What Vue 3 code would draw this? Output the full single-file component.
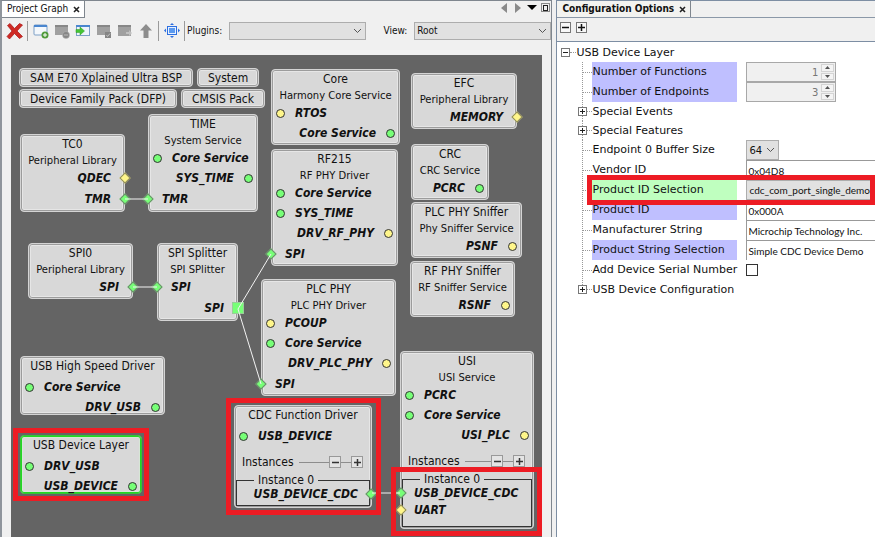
<script setup>
import { ref } from 'vue'

const packs = [
  ['SAM E70 Xplained Ultra BSP', 'System'],
  ['Device Family Pack (DFP)', 'CMSIS Pack'],
]

const i = (name, color = 'green', shape = 'circle') => ({ name, color, shape, side: 'in' })
const o = (name, color = 'green', shape = 'circle') => ({ name, color, shape, side: 'out' })

// x, y, w, h are positions on the graph canvas
const nodes = [
  { title: 'Core', sub: 'Harmony Core Service', x: 260, y: 14, w: 129, h: 76, ports: [i('RTOS', 'yellow'), o('Core Service')] },
  { title: 'EFC', sub: 'Peripheral Library', x: 400, y: 18, w: 106, h: 56, ports: [o('MEMORY', 'yellow', 'diamond')] },
  { title: 'TC0', sub: 'Peripheral Library', x: 9, y: 79, w: 105, h: 78, ports: [o('QDEC', 'yellow', 'diamond'), o('TMR', 'green', 'diamond')] },
  { title: 'TIME', sub: 'System Service', x: 137, y: 59, w: 110, h: 98, ports: [i('Core Service'), o('SYS_TIME'), i('TMR', 'green', 'diamond')] },
  { title: 'RF215', sub: 'RF PHY Driver', x: 260, y: 94, w: 127, h: 117, ports: [i('Core Service'), i('SYS_TIME'), o('DRV_RF_PHY', 'yellow'), i('SPI', 'green', 'diamond')] },
  { title: 'CRC', sub: 'CRC Service', x: 400, y: 89, w: 78, h: 56, ports: [o('PCRC')] },
  { title: 'PLC PHY Sniffer', sub: 'Phy Sniffer Service', x: 400, y: 147, w: 111, h: 56, ports: [o('PSNF', 'yellow')] },
  { title: 'RF PHY Sniffer', sub: 'RF Sniffer Service', x: 399, y: 206, w: 105, h: 56, ports: [o('RSNF', 'yellow')] },
  { title: 'SPI0', sub: 'Peripheral Library', x: 17, y: 188, w: 105, h: 56, ports: [o('SPI', 'green', 'diamond')] },
  { title: 'SPI Splitter', sub: 'SPI SPlitter', x: 146, y: 188, w: 81, h: 78, ports: [i('SPI', 'green', 'diamond'), o('SPI', 'green', 'square')] },
  { title: 'PLC PHY', sub: 'PLC PHY Driver', x: 250, y: 224, w: 135, h: 117, ports: [i('PCOUP', 'yellow'), i('Core Service'), o('DRV_PLC_PHY', 'yellow'), i('SPI', 'green', 'diamond')] },
  { title: 'USB High Speed Driver', x: 9, y: 301, w: 145, h: 59, ports: [i('Core Service'), o('DRV_USB')] },
  { title: 'USB Device Layer', x: 9, y: 380, w: 122, h: 59, selected: true, ports: [i('DRV_USB'), o('USB_DEVICE')] },
  { title: 'CDC Function Driver', x: 223, y: 350, w: 138, h: 103, ports: [i('USB_DEVICE')], instance: [o('USB_DEVICE_CDC', 'green', 'diamond')] },
  { title: 'USI', sub: 'USI Service', x: 389, y: 296, w: 134, h: 178, ports: [i('PCRC'), i('Core Service'), o('USI_PLC', 'yellow')], instance: [i('USB_DEVICE_CDC', 'green', 'diamond'), i('UART', 'yellow', 'diamond')] },
]

const edges = [
  [114, 144, 137, 144],
  [122, 232, 146, 232],
  [227, 254, 260, 199],
  [227, 254, 250, 329],
  [361, 438, 389, 438],
]

const highlights = [
  { x: 2, y: 373, w: 136, h: 73 },
  { x: 215, y: 343, w: 155, h: 117 },
  { x: 380, y: 412, w: 151, h: 69 },
]

const box = (r) => ({ left: r.x + 'px', top: r.y + 'px', width: r.w + 'px', height: r.h + 'px' })

const rows = ref([
  { id: 'functions', label: 'Number of Functions', tint: 'violet', kind: 'number', value: 1 },
  { id: 'endpoints', label: 'Number of Endpoints', tint: 'violet', kind: 'number', value: 3 },
  { id: 'events', label: 'Special Events', kind: 'group' },
  { id: 'features', label: 'Special Features', kind: 'group' },
  { id: 'buffer', label: 'Endpoint 0 Buffer Size', kind: 'size', value: '64' },
  { id: 'vendor', label: 'Vendor ID', kind: 'text', value: '0x04D8' },
  { id: 'selection', label: 'Product ID Selection', tint: 'green', kind: 'select', value: 'cdc_com_port_single_demo', marked: true },
  { id: 'product', label: 'Product ID', tint: 'violet', kind: 'text', value: '0x000A' },
  { id: 'manufacturer', label: 'Manufacturer String', kind: 'text', value: 'Microchip Technology Inc.' },
  { id: 'string', label: 'Product String Selection', tint: 'violet', kind: 'text', value: 'Simple CDC Device Demo' },
  { id: 'serial', label: 'Add Device Serial Number', kind: 'check', value: false },
  { id: 'config', label: 'USB Device Configuration', kind: 'group' },
])
</script>

<template>
  <main class="app">
    <section class="panel graph-panel">
      <header class="tabs">
        <div class="tab active">
          <span>Project Graph</span>
          <button class="close" aria-label="Close Project Graph"><svg width="7" height="7" viewBox="0 0 7 7"><path d="M1 1l5 5M6 1l-5 5" stroke="#222" stroke-width="1.6" /></svg></button>
        </div>
        <div class="tab-nav">
          <svg width="50" height="12" viewBox="0 0 50 12">
            <path d="M6 1v10L0 6z" fill="#8a8a8a" />
            <path d="M14 1v10l6-5z" fill="#8a8a8a" />
            <path d="M26 3h10l-5 5z" fill="#000" />
            <rect x="40.500" y="1.500" width="8" height="8" fill="none" stroke="#222" stroke-dasharray="1 1" />
            <rect x="42.500" y="3.500" width="4" height="5" fill="#eee" stroke="#222" />
          </svg>
        </div>
      </header>

      <div class="toolbar">
        <button class="tool" aria-label="Remove">
          <svg width="18" height="18" viewBox="0 0 18 18"><path d="M1.500 3.500L4 1.500l4.500 5 5-5 3 1.500-5.500 6 5.500 5.500-3 2-5-5-5 5.500-2.500-2.500 5-5.500z" fill="#cf2a24" stroke="#a81616" stroke-width=".7" /></svg>
        </button>
        <span class="rule"></span>
        <button class="tool" aria-label="Add group">
          <svg width="16" height="16" viewBox="0 0 16 16"><rect x="1" y="2" width="13" height="10" rx="1" fill="#f4f8fc" stroke="#7d9fc6" /><path d="M1 2h13v2H1z" fill="#4a86cf" /><circle cx="12" cy="12" r="3.500" fill="#4f9a3a" /><path d="M12 10v4M10 12h4" stroke="#fff" /></svg>
        </button>
        <button class="tool" aria-label="Remove group">
          <svg width="16" height="16" viewBox="0 0 16 16"><rect x="1" y="2" width="13" height="10" fill="#a0a0a0" /><path d="M1 2h13v2H1z" fill="#878787" /><circle cx="12" cy="12" r="3.500" fill="#858585" stroke="#bbb" stroke-width=".5" /><path d="M10 12h4" stroke="#bbb" /></svg>
        </button>
        <button class="tool" aria-label="Import">
          <svg width="16" height="16" viewBox="0 0 16 16"><rect x="1.500" y="2.500" width="13" height="10" fill="#eef4fb" stroke="#7d9fc6" /><path d="M1 2h14v2H1z" fill="#4a86cf" /><path d="M1 6.500h4V4L9.500 8 5 12V9.500H1z" fill="#46c534" stroke="#2f9a22" stroke-width=".5" /></svg>
        </button>
        <button class="tool" aria-label="Select group">
          <svg width="16" height="16" viewBox="0 0 16 16"><rect x="1" y="2" width="13" height="10" fill="#a0a0a0" /><path d="M1 2h13v2H1z" fill="#878787" /><rect x="9" y="9" width="6" height="6" fill="#858585" /><path d="M10.500 12l1 1.500 2.500-3" fill="none" stroke="#c4c4c4" /></svg>
        </button>
        <button class="tool" aria-label="Export">
          <svg width="16" height="16" viewBox="0 0 16 16"><rect x="1" y="2" width="13" height="11" fill="#a0a0a0" /><path d="M1 2h13v2H1z" fill="#878787" /><path d="M9 9h3V7l3 3-3 3v-2H9z" fill="#c0c0c0" /></svg>
        </button>
        <button class="tool" aria-label="Up">
          <svg width="16" height="16" viewBox="0 0 16 16"><path d="M8 1l6 6.500h-3.500V15h-5V7.500H2z" fill="#8d8d8d" /></svg>
        </button>
        <span class="rule"></span>
        <button class="tool" aria-label="Fit">
          <svg width="16" height="16" viewBox="0 0 16 16"><rect x="3.500" y="3.500" width="9" height="8" fill="#e8f1ff" stroke="#2d6fe0" /><rect x="5" y="5" width="6" height="5" fill="#5b9af0" /><path d="M8 0l2 2H6zM8 15l2-2H6zM0 7.500l2-2v4zM16 7.500l-2-2v4z" fill="#2d6fe0" /></svg>
        </button>
        <span class="rule"></span>
        <label for="plugins">Plugins:</label>
        <div class="combo plugins">
          <select id="plugins"><option></option></select>
          <svg width="9" height="6" viewBox="0 0 9 6"><path d="M1 1l3.500 3.500L8 1" fill="none" stroke="#555" /></svg>
        </div>
        <label class="view-label" for="view">View:</label>
        <div class="combo view">
          <select id="view"><option>Root</option></select>
          <svg width="9" height="6" viewBox="0 0 9 6"><path d="M1 1l3.500 3.500L8 1" fill="none" stroke="#555" /></svg>
        </div>
      </div>

      <div class="canvas">
        <div class="packs">
          <div v-for="(line, n) in packs" :key="n" class="pack-row">
            <button v-for="p in line" :key="p" class="pack">{{ p }}</button>
          </div>
        </div>

        <article v-for="n in nodes" :key="n.title" class="node" :class="{ selected: n.selected, plain: !n.sub }" :style="box(n)">
          <h3>{{ n.title }}</h3>
          <p v-if="n.sub" class="sub">{{ n.sub }}</p>
          <div v-for="p in n.ports" :key="p.name + p.side" class="port" :class="[p.side, p.shape]">
            <i class="mark" :class="p.color"></i><span>{{ p.name }}</span>
          </div>
          <template v-if="n.instance">
            <div class="instances">
              <span>Instances</span><hr class="grow"><button class="pm" aria-label="Remove instance"><svg width="9" height="9" viewBox="0 0 9 9"><path d="M1 4.500h7" stroke="#333" stroke-width="1.500" /></svg></button><hr class="dash"><button class="pm" aria-label="Add instance"><svg width="9" height="9" viewBox="0 0 9 9"><path d="M1 4.500h7M4.500 1v7" stroke="#333" stroke-width="1.500" /></svg></button>
            </div>
            <fieldset class="instance">
              <legend>Instance 0</legend>
              <div v-for="p in n.instance" :key="p.name" class="port" :class="[p.side, p.shape]">
                <i class="mark" :class="p.color"></i><span>{{ p.name }}</span>
              </div>
            </fieldset>
          </template>
        </article>

        <svg class="edges" width="531" height="482">
          <line v-for="(e, k) in edges" :key="k" :x1="e[0]" :y1="e[1]" :x2="e[2]" :y2="e[3]" stroke="#f2f2f2" />
        </svg>
        <div v-for="(h, k) in highlights" :key="k" class="highlight" :style="box(h)"></div>
      </div>
    </section>

    <section class="panel options-panel">
      <header class="tabs">
        <div class="tab">
          <strong>Configuration Options</strong>
          <button class="close" aria-label="Close Configuration Options"><svg width="7" height="7" viewBox="0 0 7 7"><path d="M1 1l5 5M6 1l-5 5" stroke="#222" stroke-width="1.600" /></svg></button>
        </div>
      </header>
      <div class="tree-tools">
        <button class="expand" aria-label="Collapse all"><svg width="9" height="9" viewBox="0 0 9 9"><path d="M1 4.500h7" stroke="#111" stroke-width="1.500" /></svg></button>
        <button class="expand" aria-label="Expand all"><svg width="9" height="9" viewBox="0 0 9 9"><path d="M1 4.500h7M4.500 1v7" stroke="#111" stroke-width="1.500" /></svg></button>
      </div>
      <div class="tree">
        <div class="root">
          <button class="toggle" aria-label="Collapse"><svg width="7" height="7" viewBox="0 0 7 7"><path d="M1 3.500h5" stroke="#222" /></svg></button>
          <i class="stub"></i><span>USB Device Layer</span>
        </div>
        <div v-for="r in rows" :key="r.id" class="row" :class="{ group: r.kind === 'group' }">
          <div class="guide">
            <button v-if="r.kind === 'group'" class="toggle" :aria-label="'Expand ' + r.label"><svg width="7" height="7" viewBox="0 0 7 7"><path d="M1 3.500h5M3.500 1v5" stroke="#222" /></svg></button>
            <i class="stub"></i>
          </div>
          <span v-if="r.kind === 'group'" class="name">{{ r.label }}</span>
          <label v-else class="name" :class="r.tint" :for="r.id">{{ r.label }}</label>
          <div v-if="r.kind === 'number'" class="spinner">
            <input :id="r.id" v-model="r.value" type="number" disabled>
            <div class="steps">
              <button aria-label="Increase" disabled><svg width="5" height="3" viewBox="0 0 5 3"><path d="M0 3L2.500 0 5 3z" fill="#555" /></svg></button>
              <button aria-label="Decrease" disabled><svg width="5" height="3" viewBox="0 0 5 3"><path d="M0 0l2.500 3L5 0z" fill="#555" /></svg></button>
            </div>
          </div>
          <div v-else-if="r.kind === 'size'" class="combo size">
            <select :id="r.id"><option>{{ r.value }}</option></select>
            <svg width="9" height="6" viewBox="0 0 9 6"><path d="M1 1l3.500 3.500L8 1" fill="none" stroke="#555" /></svg>
          </div>
          <div v-else-if="r.kind === 'select'" class="combo wide"><select :id="r.id"><option>{{ r.value }}</option></select></div>
          <input v-else-if="r.kind === 'text'" :id="r.id" v-model="r.value" class="text" type="text">
          <input v-else-if="r.kind === 'check'" :id="r.id" v-model="r.value" class="check" type="checkbox">
          <div v-if="r.marked" class="highlight row-mark"></div>
        </div>
      </div>
    </section>
  </main>
</template>

<style>
body { background: #f0f0f0; }
</style>

<style scoped>
* { box-sizing: border-box; }
.app {
  display: flex; gap: 4px; min-height: 100vh; overflow: hidden;
  font: 11px/14px "DejaVu Sans Condensed", "DejaVu Sans", sans-serif; color: #111; background: #f0f0f0;
}
button { padding: 0; margin: 0; border: 0; background: none; font: inherit; color: inherit; display: flex; align-items: center; justify-content: center; }
svg { display: block; }
select, input { font: inherit; color: inherit; margin: 0; border-radius: 0; }
.panel { display: flex; flex-direction: column; min-width: 0; }
.graph-panel { flex: 552 1 0; border: 1px solid #7f868e; border-bottom: 0; border-left: 2px solid #8f959c; }
.options-panel { flex: 319 1 0; border-left: 1px solid #7d8ea3; border-top: 1px solid #7d8ea3; }
.tabs { display: flex; justify-content: space-between; height: 17px; font-size: 10px; }
.tab { display: flex; align-items: center; gap: 5px; padding: 0 4px 0 5px; border-right: 1px solid #7f868e; background: #f3f3f0; white-space: nowrap; }
.tab.active { background: #fff; border-bottom: 1px solid #7f868e; }
.tab-nav { padding: 1px 0; }
.toolbar { display: flex; align-items: center; height: 37px; padding: 0 0 11px 2px; font-size: 10px; }
.tool { flex: none; width: 21px; height: 20px; }
.rule { width: 1px; height: 20px; margin: 0 2px; background: #9a9a9a; }
.rule + label { white-space: nowrap; }
.combo { position: relative; display: flex; align-items: center; }
.combo select { appearance: none; width: 100%; height: 100%; padding: 0 2px; border: 1px solid #adadad; background: #e1e1e1; outline: 0; }
.combo svg { position: absolute; right: 4px; pointer-events: none; }
.plugins, .view { flex: 135 1 0; height: 18px; margin-left: 7px; }
.view-label { margin-left: 17px; }

.canvas { position: relative; flex: 1; min-height: 482px; margin: 0 9px 0 9px; background: #646464; overflow: hidden; font-size: 12px; }
.packs { display: flex; flex-direction: column; gap: 2px; padding: 13px 8px; }
.pack-row { display: flex; gap: 4px; }
.pack { height: 19px; padding: 0 10px; white-space: nowrap; }
.pack, .node { border: 1px solid #d4d4d4; border-radius: 4px; background: #d8d8d8; box-shadow: inset 0 0 0 1px #9c9c9c, inset 0 0 0 2px #e6e6e6; }
.node { position: absolute; display: flex; flex-direction: column; }
.node.selected { border-color: #35c435; box-shadow: inset 0 0 0 1px #22d822, inset 0 0 0 2px #d6e6d6; }
h3 { margin: 0; font: 12px/18px "DejaVu Sans Condensed", "DejaVu Sans", sans-serif; text-align: center; white-space: nowrap; }
.plain h3 { margin-bottom: 2px; }
.sub { margin: 0; font: 10px/15px "DejaVu Sans", sans-serif; text-align: center; white-space: nowrap; }
.port { display: flex; align-items: center; height: 20px; flex: none; gap: 10px; padding: 0 4px; font-weight: bold; font-style: italic; white-space: nowrap; }
.port.out { flex-direction: row-reverse; }
.port + .diamond, .square { margin-top: 1px; }
.mark { flex: none; width: 9px; height: 9px; border: 1px solid #333; border-radius: 50%; }
.green { background: #7f7; }
.yellow { background: #fff68a; }
.port.diamond, .port.square { padding: 0; gap: 9px; }
.diamond .mark { border: 1px solid #6d8a6d; border-radius: 0; width: 8px; height: 8px; margin: 0 -5px; transform: rotate(45deg); }
.diamond .mark.yellow { border-color: #8f8c5c; }
.square .mark { border: 1px solid #9c9; border-radius: 0; width: 12px; height: 12px; margin: 0 -7px; }
.diamond span, .square span { padding: 0 6px; }
.instances { display: flex; align-items: center; height: 16px; margin-top: 8px; padding: 0 8px 0 7px; }
hr { height: 1px; border: 0; margin: 0; background: #8d8d8d; }
.grow { flex: 1; margin-left: 5px; }
.dash { width: 10px; }
.pm { width: 12px; height: 12px; border: 1px solid #999; background: #e4e4e4; }
.instance { flex: 1; min-width: 0; margin: 4px 1px 1px; padding: 0; border: 1px solid #333; }
.instance legend { margin-left: 17px; padding: 0 4px; line-height: 12px; }
.instance .port { height: 16px; }
.instance .mark { margin: 0 -6px; }
.edges { position: absolute; left: 0; top: 0; pointer-events: none; }
.highlight { position: absolute; border: 5px solid #ed1c24; pointer-events: none; }

.options-panel .tabs { border-bottom: 1px solid #8b98a8; }
.tree-tools { display: flex; gap: 5px; height: 24px; padding: 4px 3px; border-bottom: 1px solid #7d8ea3; }
.expand { width: 11px; height: 11px; border: 1px solid #777; background: #f8f8f8; }
.tree { flex: 1; padding: 1px 0 8px; background: #fff; font: 11px/19px "DejaVu Sans", sans-serif; }
.root { display: flex; align-items: center; height: 19px; padding-left: 4px; }
.stub { border-top: 1px dotted #999; flex: none; }
.root .stub { width: 6px; }
.toggle { position: relative; flex: none; width: 9px; height: 9px; border: 1px solid #777; background: #fff; }
.row { position: relative; display: flex; align-items: center; height: 20px; }
.row.group { height: 19px; }
.guide { display: flex; align-items: center; justify-content: flex-end; flex: none; width: 35px; height: 100%; background: repeating-linear-gradient(#999 0 1px, #fff 1px 2px) 25px 0 / 1px 100% no-repeat; }
.row:last-child .guide { background-size: 1px 50%; }
.guide .stub { width: 9px; }
.group .guide .stub { width: 5px; }
.name { flex: none; width: 145px; height: 100%; margin-right: 9px; white-space: nowrap; }
.violet { background: #bfbfff; }
.name.green { background: #bfffbf; }
.spinner { display: flex; width: 90px; height: 20px; padding: 1px; border: 1px solid #a8a8a8; background: #f0f0f0; font-size: 10px; }
.spinner input { flex: 1; min-width: 0; padding: 0 3px; border: 0; background: none; color: #777; text-align: right; appearance: textfield; }
.spinner input::-webkit-inner-spin-button { appearance: none; }
.steps { display: flex; flex-direction: column; width: 13px; gap: 1px; }
.steps button { flex: 1; border: 1px solid #d4d4d4; background: #f4f4f4; }
.size { width: 33px; height: 20px; font-size: 10px; }
.wide, .text { font: 10px/14px Lato, "DejaVu Sans Condensed", sans-serif; }
.wide { flex: 1; height: 20px; }
.wide select { border-right: 0; }
.text { flex: 1; min-width: 0; height: 20px; padding: 0 1px; border: 1px solid #999; border-right: 0; border-bottom: 0; background: #fff; outline: 0; }
.check { appearance: none; width: 12px; height: 12px; border: 1px solid #333; background: #fff; }
.row-mark { left: 30px; right: 0; top: -5px; height: 30px; z-index: 1; }
</style>
